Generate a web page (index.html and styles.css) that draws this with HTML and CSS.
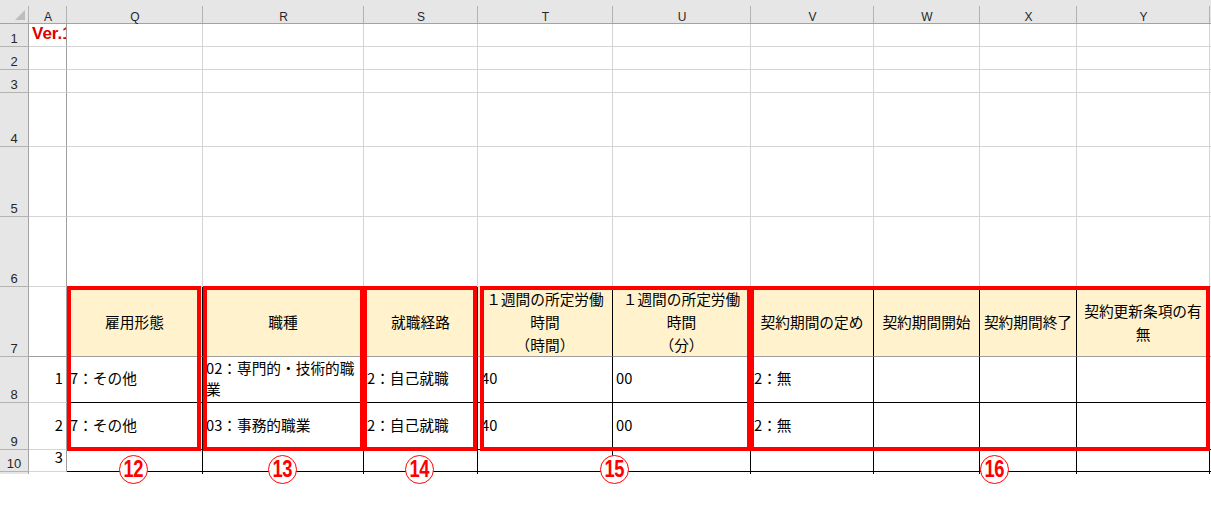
FILE: index.html
```html
<!DOCTYPE html>
<html lang="ja">
<head>
<meta charset="utf-8">
<title>Sheet</title>
<link rel="stylesheet" href="styles.css">
</head>
<body>
<div class="sheet">
  <!-- column headers -->
  <div class="corner"><svg class="tri" width="10" height="10" viewBox="0 0 10 10"><polygon points="10,0 10,10 0,10" fill="#bdbdbd"/></svg></div>
  <div class="ch">A</div>
  <div class="ch">Q</div>
  <div class="ch">R</div>
  <div class="ch">S</div>
  <div class="ch">T</div>
  <div class="ch">U</div>
  <div class="ch">V</div>
  <div class="ch">W</div>
  <div class="ch">X</div>
  <div class="ch">Y</div>
  <div class="ch chz"></div>

  <!-- row 1 -->
  <div class="rh">1</div>
  <div class="c a ver">Ver.1.0</div>
  <div class="c"></div><div class="c"></div><div class="c"></div><div class="c"></div><div class="c"></div><div class="c"></div><div class="c"></div><div class="c"></div><div class="c"></div>
  <div class="c z"></div>

  <!-- row 2 -->
  <div class="rh">2</div>
  <div class="c a"></div>
  <div class="c"></div><div class="c"></div><div class="c"></div><div class="c"></div><div class="c"></div><div class="c"></div><div class="c"></div><div class="c"></div><div class="c"></div>
  <div class="c z"></div>

  <!-- row 3 -->
  <div class="rh">3</div>
  <div class="c a"></div>
  <div class="c"></div><div class="c"></div><div class="c"></div><div class="c"></div><div class="c"></div><div class="c"></div><div class="c"></div><div class="c"></div><div class="c"></div>
  <div class="c z"></div>

  <!-- row 4 -->
  <div class="rh">4</div>
  <div class="c a"></div>
  <div class="c"></div><div class="c"></div><div class="c"></div><div class="c"></div><div class="c"></div><div class="c"></div><div class="c"></div><div class="c"></div><div class="c"></div>
  <div class="c z"></div>

  <!-- row 5 -->
  <div class="rh">5</div>
  <div class="c a"></div>
  <div class="c"></div><div class="c"></div><div class="c"></div><div class="c"></div><div class="c"></div><div class="c"></div><div class="c"></div><div class="c"></div><div class="c"></div>
  <div class="c z"></div>

  <!-- row 6 -->
  <div class="rh">6</div>
  <div class="c a"></div>
  <div class="c"></div><div class="c"></div><div class="c"></div><div class="c"></div><div class="c"></div><div class="c"></div><div class="c"></div><div class="c"></div><div class="c"></div>
  <div class="c z"></div>

  <!-- row 7: table header -->
  <div class="rh">7</div>
  <div class="c a fzb"></div>
  <div class="c hd">雇用形態</div>
  <div class="c hd">職種</div>
  <div class="c hd">就職経路</div>
  <div class="c hd">１週間の所定労働<br>時間<br>（時間）</div>
  <div class="c hd">１週間の所定労働<br>時間<br>（分）</div>
  <div class="c hd">契約期間の定め</div>
  <div class="c hd">契約期間開始</div>
  <div class="c hd">契約期間終了</div>
  <div class="c hd">契約更新条項の有<br>無</div>
  <div class="c z fzb"></div>

  <!-- row 8 -->
  <div class="rh">8</div>
  <div class="c a num">1</div>
  <div class="c d">7：その他</div>
  <div class="c d">02：専門的・技術的職<br>業</div>
  <div class="c d">2：自己就職</div>
  <div class="c d">40</div>
  <div class="c d">00</div>
  <div class="c d">2：無</div>
  <div class="c d"></div>
  <div class="c d"></div>
  <div class="c d"></div>
  <div class="c z"></div>

  <!-- row 9 -->
  <div class="rh">9</div>
  <div class="c a num">2</div>
  <div class="c d">7：その他</div>
  <div class="c d">03：事務的職業</div>
  <div class="c d">2：自己就職</div>
  <div class="c d">40</div>
  <div class="c d">00</div>
  <div class="c d">2：無</div>
  <div class="c d"></div>
  <div class="c d"></div>
  <div class="c d"></div>
  <div class="c z zb"></div>

  <!-- row 10 -->
  <div class="rh">10</div>
  <div class="c a num num-sm">3</div>
  <div class="c d"></div><div class="c d"></div><div class="c d"></div><div class="c d"></div><div class="c d"></div><div class="c d"></div><div class="c d"></div><div class="c d"></div><div class="c d"></div>
  <div class="c z zb"></div>

  <!-- tick row -->
  <div class="rh rh-tick"></div>
  <div class="tk-a"></div>
  <div class="tk"></div><div class="tk"></div><div class="tk"></div><div class="tk"></div><div class="tk"></div><div class="tk"></div><div class="tk"></div><div class="tk"></div><div class="tk"></div>
  <div class="tk-z"></div>

  <!-- red highlight frames -->
  <div class="box b-q"></div>
  <div class="box b-r"></div>
  <div class="box b-s"></div>
  <div class="box b-tu"></div>
  <div class="box b-vy"></div>

  <!-- circled labels -->
  <div class="mark m12"><span>12</span></div>
  <div class="mark m13"><span>13</span></div>
  <div class="mark m14"><span>14</span></div>
  <div class="mark m15"><span>15</span></div>
  <div class="mark m16"><span>16</span></div>
</div>
</body>
</html>
```

FILE: styles.css
```css
html, body {
  margin: 0;
  padding: 0;
  background: #ffffff;
}

body {
  min-height: 513px;
}

.sheet {
  position: relative;
  display: grid;
  grid-template-columns: 29px 38px 136px 161px 114px 135px 138px 123px 106px 97px 133px 1px;
  grid-template-rows: 24px 23px 23px 23px 54px 70px 70px 70px 46px 47px 22px 2px;
  width: 1211px;
  padding-bottom: 39px;
  font-family: "Noto Sans CJK JP", sans-serif;
  color: #000;
}

/* header strip */
.corner,
.ch {
  box-sizing: border-box;
  border-bottom: 1px solid #a3a3a3;
  background: linear-gradient(#b3b3b3, #b3b3b3) right bottom / 1px 17px no-repeat, #e6e6e6;
}

.corner {
  display: flex;
  align-items: flex-start;
  padding: 10px 0 0 15px;
}

.tri {
  display: block;
}

.ch {
  display: flex;
  align-items: flex-end;
  justify-content: center;
  font-family: "Liberation Sans", sans-serif;
  font-size: 12px;
  line-height: 12px;
  color: #262626;
}

.chz {
  background: #e6e6e6;
}

.rh {
  box-sizing: border-box;
  background: #e6e6e6;
  border-right: 1px solid #a3a3a3;
  border-bottom: 1px solid #b3b3b3;
  display: flex;
  align-items: flex-end;
  justify-content: center;
  padding-bottom: 1px;
  font-family: "Liberation Sans", sans-serif;
  font-size: 13px;
  line-height: 12px;
  color: #262626;
}

.rh-tick {
  border-bottom: none;
}

/* cells */
.c {
  box-sizing: border-box;
  border-right: 1px solid #d4d4d4;
  border-bottom: 1px solid #d4d4d4;
  overflow: hidden;
  white-space: nowrap;
}

.a {
  border-right-color: #9f9f9f;
}

.z {
  border-right: none;
}

.zb {
  border-bottom-color: #000;
}

.fzb {
  border-bottom-color: #9f9f9f;
}

.ver {
  display: flex;
  align-items: flex-end;
  padding: 0 0 4px 3px;
  font-family: "Liberation Sans", sans-serif;
  font-weight: bold;
  font-size: 17px;
  line-height: 17px;
  color: #e00000;
}

.hd {
  background: #fff2cc;
  border-right-color: #000;
  border-bottom-color: #9f9f9f;
  display: flex;
  align-items: center;
  justify-content: center;
  text-align: center;
  font-size: 14.7px;
  line-height: 23px;
}

.d {
  border-right-color: #000;
  border-bottom-color: #000;
  display: flex;
  align-items: center;
  padding: 0 0 4px 3px;
  font-size: 14.7px;
  line-height: 21px;
}

.num {
  display: flex;
  align-items: center;
  justify-content: flex-end;
  padding: 0 3px 4px 0;
  font-size: 14.7px;
  line-height: 21px;
}

.num-sm {
  overflow: visible;
  padding-bottom: 0;
  line-height: 14px;
  align-items: flex-start;
}

/* little border ends under the last row */
.tk {
  border-right: 1px solid #000;
}

/* red frames drawn over the table */
.box {
  position: absolute;
  top: 286px;
  height: 165px;
  box-sizing: border-box;
  border: 4px solid #ff0000;
}

.b-q { left: 67px; width: 134px; }
.b-r { left: 203px; width: 161px; }
.b-s { left: 363px; width: 114px; }
.b-tu { left: 480px; width: 271px; }
.b-vy { left: 750px; width: 460px; }

/* circled numbers */
.mark {
  position: absolute;
  top: 455px;
  width: 29px;
  height: 29px;
  box-sizing: border-box;
  border: 1px solid #ff0000;
  border-radius: 50%;
  background: #ffffff;
  display: flex;
  align-items: center;
  justify-content: center;
  color: #ff0000;
  font-family: "Liberation Sans", sans-serif;
  font-weight: bold;
  font-size: 23px;
  line-height: 23px;
}

.mark span {
  display: inline-block;
  transform: scaleX(0.8);
  letter-spacing: -0.5px;
}

.m12 { left: 119px; }
.m13 { left: 268px; }
.m14 { left: 405px; }
.m15 { left: 600px; }
.m16 { left: 980px; }
```
